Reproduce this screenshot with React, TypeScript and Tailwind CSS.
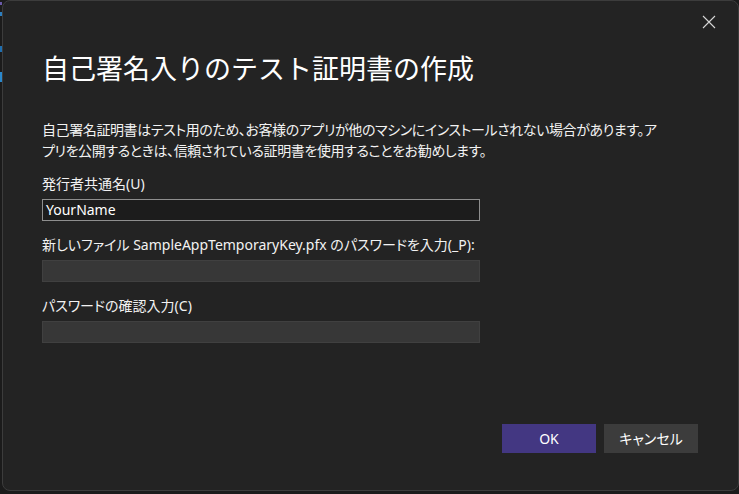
import React from 'react';

const FONT = "font-['Noto_Sans','Noto_Sans_CJK_JP',sans-serif]";

// dialog field row: label + input box
function Field({ label, value, disabled }: { label: string; value?: string; disabled?: boolean }) {
  return (
    <div className="flex flex-col">
      <div className="h-[20px] text-[14px] leading-[20px] text-[#f2f2f2] [font-feature-settings:'palt']">{label}</div>
      <div
        className={
          disabled
            ? 'mt-[5px] h-[22px] w-[438px] border border-[#404040] bg-[#373737]'
            : 'mt-[5px] h-[22px] w-[438px] border border-[#8e8e8e] bg-[#1c1c1c] px-[3px] text-[14px] leading-[20px] text-white'
        }
      >
        {value}
      </div>
    </div>
  );
}

export default function App() {
  return (
    <div className={`${FONT} flex h-[494px] w-[739px] bg-[#1b1b1b]`}>
      <div className="flex w-[2px] flex-col">
        <div className="mt-[2px] h-[3px] bg-[#6a5aa8]" />
        <div className="mt-[7px] h-[4px] bg-[#2d7fc0]" />
        <div className="mt-[30px] h-[6px] bg-[#1f6fb0]" />
        <div className="mt-[20px] h-[10px] bg-[#2a88cc]" />
      </div>
      <div className="flex h-[491px] w-[737px] flex-col rounded-lg border border-[#3c3c3c] bg-[#232323]">
        <div className="flex h-[50px] justify-end pr-[22px] pt-[14px]">
          <svg width="14" height="14" viewBox="0 0 14 14" className="text-[#d6d6d6]">
            <path d="M1 1 L13 13 M13 1 L1 13" stroke="currentColor" strokeWidth="1.1" fill="none" />
          </svg>
        </div>
        <div className="flex flex-1 flex-col pl-[39px]">
          <h1 className="text-[27px] leading-[36px] font-normal text-white">自己署名入りのテスト証明書の作成</h1>
          <p className="mt-[33px] w-[625px] text-[14px] leading-[20.5px] tracking-[-0.4px] text-[#f2f2f2] [font-feature-settings:'palt']">
            自己署名証明書はテスト用のため、お客様のアプリが他のマシンにインストールされない場合があります。アプリを公開するときは、信頼されている証明書を使用することをお勧めします。
          </p>
          <div className="mt-[13px] flex flex-col gap-[14px]">
            <Field label="発行者共通名(U)" value="YourName" />
            <Field label="新しいファイル SampleAppTemporaryKey.pfx のパスワードを入力(_P):" disabled />
            <Field label="パスワードの確認入力(C)" disabled />
          </div>
          <div className="mt-auto mb-[37px] flex justify-end gap-[8px] pr-[40px]">
            <button className="h-[29px] w-[94px] bg-[#433782] text-[14px] text-white">OK</button>
            <button className="h-[29px] w-[94px] bg-[#3c3c3c] text-[14px] text-white [font-feature-settings:'palt']">キャンセル</button>
          </div>
        </div>
      </div>
    </div>
  );
}
